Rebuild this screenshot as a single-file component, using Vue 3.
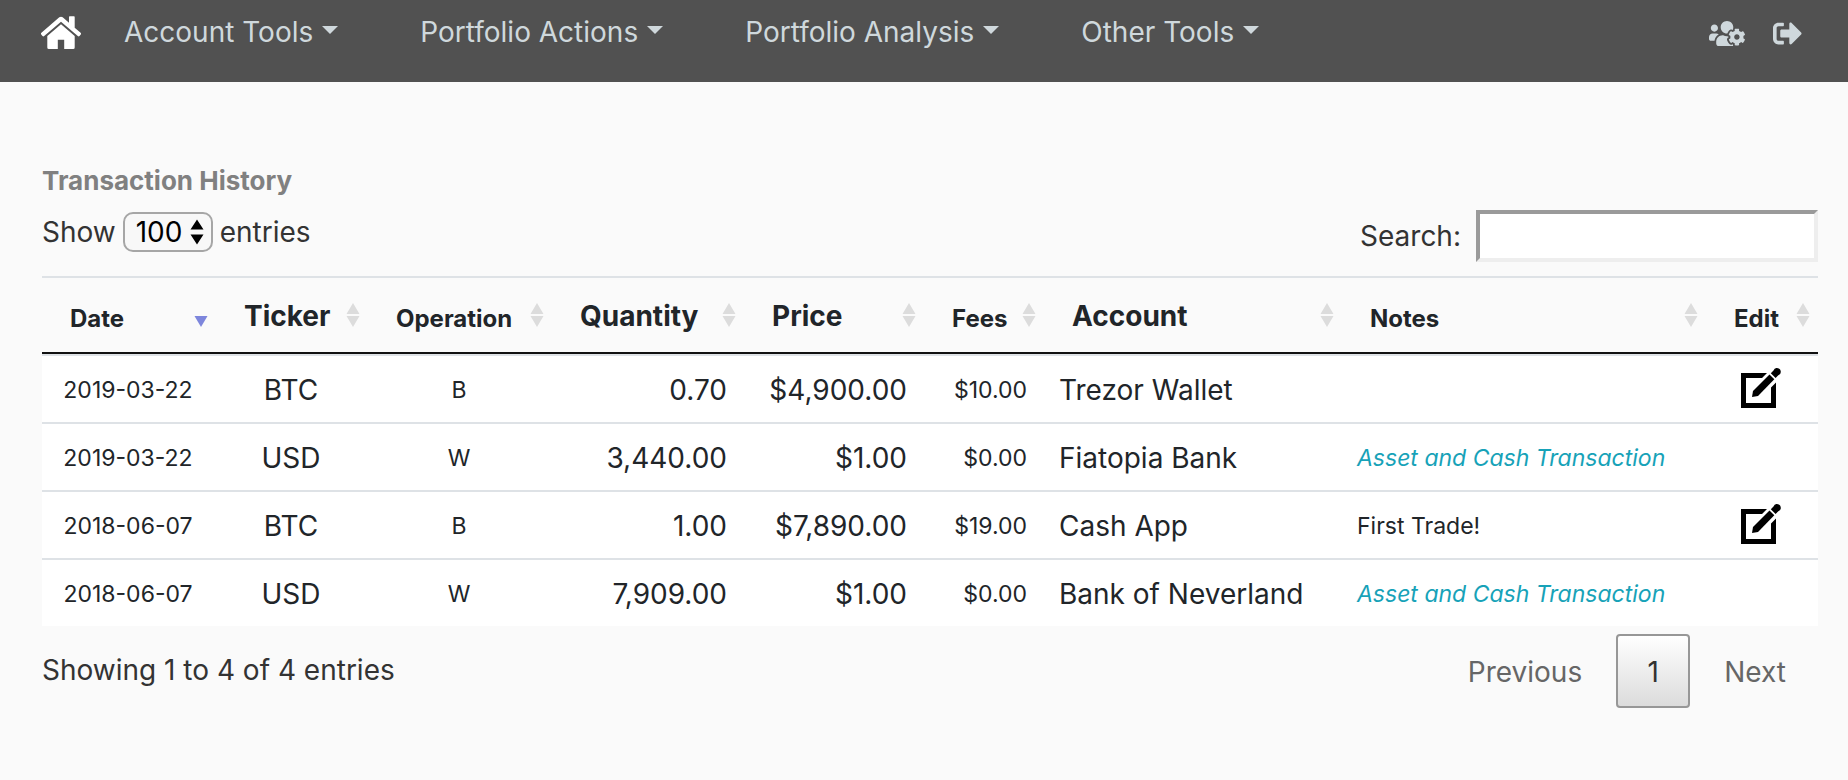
<script setup>
const menus = ['Account Tools', 'Portfolio Actions', 'Portfolio Analysis', 'Other Tools']

const columns = [
  { key: 'date', label: 'Date', small: true, sorted: true },
  { key: 'ticker', label: 'Ticker' },
  { key: 'operation', label: 'Operation', small: true },
  { key: 'quantity', label: 'Quantity' },
  { key: 'price', label: 'Price' },
  { key: 'fees', label: 'Fees', small: true },
  { key: 'account', label: 'Account' },
  { key: 'notes', label: 'Notes', small: true },
  { key: 'edit', label: 'Edit', small: true },
]

const rows = [
  { date: '2019-03-22', ticker: 'BTC', operation: 'B', quantity: '0.70', price: '$4,900.00', fees: '$10.00', account: 'Trezor Wallet', notes: '', editable: true },
  { date: '2019-03-22', ticker: 'USD', operation: 'W', quantity: '3,440.00', price: '$1.00', fees: '$0.00', account: 'Fiatopia Bank', notes: 'Asset and Cash Transaction', linked: true },
  { date: '2018-06-07', ticker: 'BTC', operation: 'B', quantity: '1.00', price: '$7,890.00', fees: '$19.00', account: 'Cash App', notes: 'First Trade!', editable: true },
  { date: '2018-06-07', ticker: 'USD', operation: 'W', quantity: '7,909.00', price: '$1.00', fees: '$0.00', account: 'Bank of Neverland', notes: 'Asset and Cash Transaction', linked: true },
]
</script>

<template>
  <header class="navbar">
    <a class="home" href="#" aria-label="Home">
      <svg width="42" height="34" viewBox="0 0 42 34" fill="#fff" aria-hidden="true">
        <path d="M19.300 1.300Q21 0 22.700 1.300L29 6.800V1Q29 .3 29.700 .3H34Q34.700 .3 34.700 1V11.700L40.600 16.800Q41.500 17.600 40.800 18.500L39.500 20Q38.700 20.900 37.800 20.100L21 5.800 4.200 20.100Q3.300 20.900 2.500 20L1.200 18.500Q.5 17.600 1.400 16.800Z" />
        <path d="M21 8.200 34.700 19.900V31.500Q34.700 33 33.200 33H24.200V23.700H17.800V33H8.800Q7.300 33 7.300 31.500V19.900Z" />
      </svg>
    </a>
    <nav class="menus" aria-label="Main">
      <button v-for="menu in menus" :key="menu" type="button" class="menu">
        {{ menu }}<span class="caret"></span>
      </button>
    </nav>
    <div class="user-links">
      <a href="#" aria-label="User settings">
        <svg width="36" height="29" viewBox="0 0 640 512" fill="currentColor" aria-hidden="true">
          <path d="M610.5 341.3c2.600-14.100 2.600-28.500 0-42.600l25.800-14.900c3-1.700 4.300-5.200 3.300-8.500-6.700-21.600-18.200-41.200-33.200-57.400-2.300-2.500-6-3.100-9-1.400l-25.800 14.900c-10.900-9.300-23.400-16.500-36.900-21.300v-29.800c0-3.400-2.400-6.400-5.700-7.100-22.300-5-45-4.800-66.200 0-3.300.7-5.700 3.700-5.700 7.100v29.800c-13.500 4.800-26 12-36.900 21.300l-25.800-14.900c-2.900-1.700-6.700-1.100-9 1.400-15 16.200-26.500 35.800-33.200 57.400-1 3.300.4 6.800 3.300 8.500l25.800 14.900c-2.600 14.100-2.600 28.500 0 42.600l-25.800 14.900c-3 1.700-4.300 5.200-3.300 8.500 6.700 21.600 18.200 41.100 33.200 57.400 2.300 2.500 6 3.100 9 1.400l25.800-14.900c10.900 9.300 23.400 16.500 36.900 21.300v29.800c0 3.400 2.400 6.400 5.700 7.100 22.300 5 45 4.800 66.200 0 3.300-.7 5.700-3.700 5.700-7.100v-29.800c13.500-4.800 26-12 36.900-21.300l25.800 14.900c2.900 1.700 6.700 1.100 9-1.400 15-16.200 26.500-35.800 33.200-57.400 1-3.300-.4-6.800-3.300-8.500l-25.800-14.900zM496 368.500c-26.800 0-48.500-21.800-48.500-48.500s21.800-48.500 48.500-48.500 48.500 21.800 48.500 48.500-21.700 48.500-48.500 48.500zM96 224c35.300 0 64-28.700 64-64s-28.700-64-64-64-64 28.700-64 64 28.700 64 64 64zm224 32c1.900 0 3.700-.5 5.600-.6 8.300-21.700 20.500-42.100 36.300-59.200 7.400-8 17.900-12.600 28.900-12.600 6.900 0 13.700 1.800 19.600 5.300l7.900 4.600c.8-.5 1.600-.9 2.400-1.400 7-14.600 11.200-30.800 11.200-48 0-61.900-50.100-112-112-112S208 82.100 208 144c0 61.900 50.100 112 112 112zm105.200 194.500c-2.300-1.200-4.600-2.600-6.800-3.900-8.200 4.800-15.300 9.800-27.500 9.800-10.900 0-21.400-4.600-28.900-12.600-18.300-19.800-32.300-43.900-40.200-69.600-10.700-34.500 24.900-49.700 25.800-50.300-.1-2.600-.1-5.200 0-7.800l-7.900-4.600c-3.800-2.200-7-5-9.800-8.100-3.300.2-6.500.6-9.800.6-24.600 0-47.600-6-68.500-16h-8.300C179.600 288 128 339.600 128 403.200V432c0 26.500 21.500 48 48 48h255.400c-3.700-6-6.200-12.800-6.200-20.300v-9.200zM173.100 274.600C161.500 263.100 145.600 256 128 256H64c-35.300 0-64 28.700-64 64v32c0 17.700 14.300 32 32 32h65.900c6.300-47.400 34.900-87.300 75.200-109.400z" />
        </svg>
      </a>
      <a href="#" aria-label="Log out">
        <svg width="29" height="29" viewBox="0 0 512 512" fill="currentColor" aria-hidden="true">
          <path d="M497 273L329 441c-15 15-41 4.500-41-17v-96H152c-13.300 0-24-10.700-24-24v-96c0-13.300 10.700-24 24-24h136V88c0-21.400 25.900-32 41-17l168 168c9.300 9.400 9.300 24.600 0 34zM192 436v-40c0-6.600-5.400-12-12-12H96c-17.700 0-32-14.300-32-32V160c0-17.700 14.300-32 32-32h84c6.600 0 12-5.400 12-12V76c0-6.600-5.400-12-12-12H96c-53 0-96 43-96 96v192c0 53 43 96 96 96h84c6.600 0 12-5.400 12-12z" />
        </svg>
      </a>
    </div>
  </header>

  <main class="content">
    <h1 class="title">Transaction History</h1>
    <div class="controls">
      <label class="length">
        Show
        <span class="select-wrap">
          <select>
            <option>10</option>
            <option>25</option>
            <option>50</option>
            <option selected>100</option>
          </select>
          <svg class="stepper" width="14" height="26" viewBox="0 0 14 26" aria-hidden="true">
            <path d="M.5 10.500 7 .5l6.500 10ZM.5 15.500 7 25.500l6.500-10Z" />
          </svg>
        </span>
        entries
      </label>
      <label class="search">Search: <input type="search"></label>
    </div>

    <table>
      <colgroup>
        <col v-for="col in columns" :key="col.key" :class="'w-' + col.key">
      </colgroup>
      <thead>
        <tr>
          <th v-for="col in columns" :key="col.key" scope="col" :class="{ small: col.small }">
            <div class="head">
              <span class="label">{{ col.label }}</span>
              <svg v-if="col.sorted" class="sort" width="14" height="24" viewBox="0 0 14 24" fill="#7d86dc" aria-hidden="true">
                <path d="M.5 13h13L7 24Z" />
              </svg>
              <svg v-else class="sort" width="14" height="24" viewBox="0 0 14 24" fill="#dcdcdc" aria-hidden="true">
                <path d="M.5 11 7 0l6.500 11ZM.5 13h13L7 24Z" />
              </svg>
            </div>
          </th>
        </tr>
      </thead>
      <tbody>
        <tr v-for="(row, i) in rows" :key="i">
          <td class="small center">{{ row.date }}</td>
          <td class="center">{{ row.ticker }}</td>
          <td class="small center">{{ row.operation }}</td>
          <td class="right">{{ row.quantity }}</td>
          <td class="right">{{ row.price }}</td>
          <td class="small right">{{ row.fees }}</td>
          <td>{{ row.account }}</td>
          <td class="small" :class="{ linked: row.linked }">{{ row.notes }}</td>
          <td class="edit-cell">
            <a v-if="row.editable" class="edit" href="#" aria-label="Edit transaction">
              <svg width="40" height="40" viewBox="0 0 40 40" aria-hidden="true">
                <path d="M26 5H0v35h35V14.500l-5 5V35H5V10h16Z" />
                <path d="M11 29 12 23 28.500 6.500 33.300 11.300 17 28Z" />
                <path d="M29.800 5.200 32.500 2.500Q33.500-.2 36 0 39.800.3 39.800 4 39.800 6.500 37.300 7.300L34.600 10Z" />
              </svg>
            </a>
          </td>
        </tr>
      </tbody>
    </table>

    <div class="footer">
      <div>Showing 1 to 4 of 4 entries</div>
      <nav class="pages" aria-label="Pagination">
        <button type="button" disabled>Previous</button>
        <button type="button" class="current" aria-current="page">1</button>
        <button type="button" disabled>Next</button>
      </nav>
    </div>
  </main>
</template>

<style>
body {
  margin: 0;
  background: #fafafa;
}
</style>

<style scoped>
* {
  box-sizing: border-box;
}

.navbar,
.content,
button,
select,
input {
  font-family: Inter, "Liberation Sans", sans-serif;
  font-size: 28px;
  line-height: 40px;
}

.navbar {
  display: flex;
  align-items: flex-start;
  height: 82px;
  padding: 12px 46px 0 40px;
  background: #515151;
  color: #cfd8dc;
}

.home {
  display: flex;
  width: 84px;
  padding-top: 4px;
}

.menus {
  display: flex;
  gap: 82px;
}

.menu {
  display: flex;
  padding: 0;
  border: 0;
  background: none;
  color: inherit;
  white-space: nowrap;
}

.caret {
  margin: 14px 0 0 9px;
  width: 0;
  height: 0;
  border: 8px solid transparent;
  border-top-color: currentColor;
  border-bottom: 0;
}

.user-links {
  display: flex;
  gap: 28px;
  margin-left: auto;
  padding-top: 7px;
}

.user-links a {
  display: flex;
  color: inherit;
}

.content {
  padding: 80px 30px 0 42px;
  color: #333;
}

.title {
  margin: 0;
  font-size: 26px;
  font-weight: 700;
  line-height: 38px;
  color: #808080;
}

.controls {
  display: flex;
  justify-content: space-between;
  padding-top: 10px;
  margin-bottom: 14px;
}

.length,
.search {
  display: flex;
  align-items: center;
}

.length {
  gap: 7px;
  height: 44px;
}

.select-wrap {
  display: flex;
  align-items: center;
  position: relative;
}

select {
  appearance: none;
  width: 90px;
  height: 40px;
  padding: 0 0 0 11px;
  border: 2px solid #a6a6a6;
  border-radius: 10px;
  background: #f8f8f8;
  color: #000;
  line-height: 32px;
}

.stepper {
  position: absolute;
  right: 9px;
  pointer-events: none;
}

.search {
  gap: 15px;
}

input {
  width: 342px;
  height: 52px;
  padding: 2px;
  border: 4px solid;
  border-color: #9a9a9a #eee #eee #9a9a9a;
  border-radius: 0;
  background: #fff;
}

table {
  width: 100%;
  table-layout: fixed;
  border-collapse: separate;
  border-spacing: 0;
  color: #212529;
}

.w-date { width: 174px; }
.w-ticker { width: 152px; }
.w-operation { width: 184px; }
.w-quantity { width: 192px; }
.w-price { width: 180px; }
.w-fees { width: 120px; }
.w-account { width: 298px; }
.w-edit { width: 112px; }

th {
  height: 78px;
  padding: 0 8px 0 28px;
  border-top: 2px solid #dee2e6;
  border-bottom: 2px solid #111;
  text-align: left;
  font-weight: 700;
}

.head {
  display: flex;
  align-items: center;
  justify-content: space-between;
}

.label {
  padding-top: 2px;
}

th.small {
  font-size: 24px;
}

.small .label {
  padding-top: 8px;
}

.sort {
  flex: none;
}

td {
  height: 68px;
  padding: 2px 17px 0 15px;
  border-top: 2px solid #dee2e6;
  background: #fff;
  white-space: nowrap;
}

td.small {
  font-size: 23px;
}

.center {
  text-align: center;
}

.linked {
  color: #17a2b8;
  font-style: italic;
}

td.edit-cell {
  padding-top: 0;
  padding-bottom: 2px;
}

.edit {
  display: flex;
  justify-content: center;
  color: #000;
}

.right {
  text-align: right;
}

.footer {
  display: flex;
  align-items: flex-start;
  justify-content: space-between;
}

.footer > div {
  padding-top: 24px;
}

.pages {
  display: flex;
  gap: 2px;
  padding-top: 8px;
}

.pages button {
  height: 74px;
  padding: 2px 32px 0;
  border: 0;
  background: none;
  color: #666;
}

.pages .current {
  width: 74px;
  padding: 2px 0 0;
  border: 2px solid #979797;
  border-radius: 4px;
  background: linear-gradient(#fff, #dcdcdc);
  color: #333;
}
</style>
